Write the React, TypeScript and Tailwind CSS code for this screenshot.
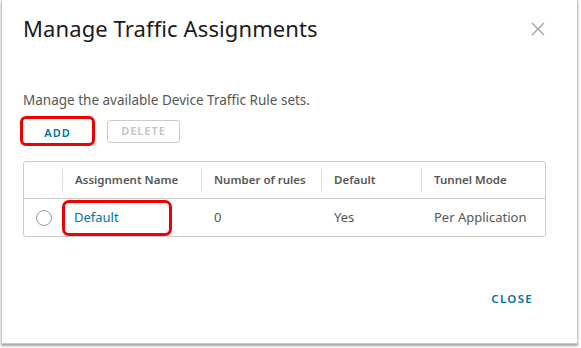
import React from 'react';

const font = { fontFamily: '"Noto Sans", "Open Sans", Arial, sans-serif' };

const App = () => {
  const columns = ['Assignment Name', 'Number of rules', 'Default', 'Tunnel Mode'];

  return (
    <div className="w-[581px] h-[348px] bg-white" style={font}>
      <div className="ml-[1px] w-[577px] h-[344px] bg-white border-x border-b border-[#c8c8c8] shadow-[0_2px_2px_rgba(0,0,0,0.35)] flex flex-col">
        <div className="flex items-start justify-between pl-[21px] pr-[32px] pt-[13px]">
          <h1 className="text-[22px] leading-[30px] text-[#1b1b1b] tracking-[0.1px]">Manage Traffic Assignments</h1>
          <button className="mt-[9px] text-[#a0a0a0]">
            <svg width="14" height="14" viewBox="0 0 14 14" fill="none" stroke="currentColor" strokeWidth="1.3">
              <path d="M1 1 L13 13 M13 1 L1 13" />
            </svg>
          </button>
        </div>

        <p className="pl-[21px] mt-[48px] text-[13.5px] leading-[18px] text-[#565656]">
          Manage the available Device Traffic Rule sets.
        </p>

        <div className="flex items-center gap-[12px] pl-[18px] mt-[7px]">
          <div className="border-[3px] border-[#ee0000] rounded-[6px]">
            <button className="w-[69px] h-[18px] text-[11px] font-semibold tracking-[1px] text-[#0072a3]">ADD</button>
          </div>
          <button className="w-[73px] h-[23px] border border-[#cccccc] rounded-[3px] text-[11px] font-semibold tracking-[1px] text-[#c4c4c4]">DELETE</button>
        </div>

        <div className="ml-[21px] mt-[15px] w-[523px] border border-[#cccccc] rounded-[3px] text-[#565656]">
          <div className="flex h-[37px] items-center border-b border-[#cccccc] text-[11.5px] font-semibold">
            <div className="w-[38px]" />
            {columns.map((c, i) => (
              <div key={c} className={`flex items-center h-[22px] border-l border-[#dddddd] pl-[12px] ${i === 0 ? 'w-[139px]' : i === 1 ? 'w-[120px]' : i === 2 ? 'w-[100px]' : 'flex-1'}`}>
                {c}
              </div>
            ))}
          </div>
          <div className="flex h-[37px] items-center text-[13px]">
            <div className="w-[38px] flex justify-center pl-[2px]">
              <span className="block w-[16px] h-[16px] rounded-full border border-[#9a9a9a]" />
            </div>
            <div className="w-[139px] h-[37px] flex items-center">
              <div className="w-[110px] h-[36px] border-[3px] border-[#ee0000] rounded-[7px] flex items-center pl-[9px] text-[#0072a3]">
                Default
              </div>
            </div>
            <div className="w-[120px] pl-[13px]">0</div>
            <div className="w-[100px] pl-[13px]">Yes</div>
            <div className="flex-1 pl-[13px]">Per Application</div>
          </div>
        </div>

        <div className="flex justify-end pr-[44px] mt-[53px]">
          <button className="text-[11.5px] font-semibold tracking-[1.3px] text-[#0072a3]">CLOSE</button>
        </div>
      </div>
    </div>
  );
};

export default App;
